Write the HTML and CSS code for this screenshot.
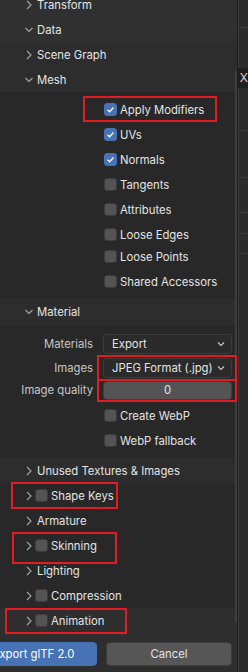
FILE: index.html
```html
<!DOCTYPE html>
<html lang="en">
<head>
    <meta charset="UTF-8">
    <title>Export glTF 2.0</title>
    <link rel="stylesheet" href="styles.css">
</head>
<body>

    <div class="app">
        <div class="panel">
            <div class="scrollbar"></div>

            <div class="sec top">
                <div class="row head">
                    <svg class="chev" viewBox="0 0 8 10"><polyline points="2,1 6,5 2,9"/></svg>
                    <span>Transform</span>
                </div>
                <div class="row head">
                    <svg class="chev" viewBox="0 0 8 10"><polyline points="0.5,3 4,6.5 7.5,3"/></svg>
                    <span>Data</span>
                </div>
            </div>

            <div class="sec data">
                <div class="row head">
                    <svg class="chev" viewBox="0 0 8 10"><polyline points="2,1 6,5 2,9"/></svg>
                    <span>Scene Graph</span>
                </div>
                <div class="row head">
                    <svg class="chev" viewBox="0 0 8 10"><polyline points="0.5,3 4,6.5 7.5,3"/></svg>
                    <span>Mesh</span>
                </div>
            </div>

            <div class="sec body mesh">
                <div class="row opt">
                    <span class="box on"><svg viewBox="0 0 13 13"><polyline points="3,6.8 5.4,9.2 10,4.2"/></svg></span>
                    <span>Apply Modifiers</span>
                    <div class="mark mark-apply"></div>
                </div>
                <div class="row opt">
                    <span class="box on"><svg viewBox="0 0 13 13"><polyline points="3,6.8 5.4,9.2 10,4.2"/></svg></span>
                    <span>UVs</span>
                </div>
                <div class="row opt">
                    <span class="box on"><svg viewBox="0 0 13 13"><polyline points="3,6.8 5.4,9.2 10,4.2"/></svg></span>
                    <span>Normals</span>
                </div>
                <div class="row opt"><span class="box"></span><span>Tangents</span></div>
                <div class="row opt"><span class="box"></span><span>Attributes</span></div>
                <div class="row opt"><span class="box"></span><span>Loose Edges</span></div>
                <div class="row opt tight"><span class="box"></span><span>Loose Points</span></div>
                <div class="row opt"><span class="box"></span><span>Shared Accessors</span></div>
            </div>

            <div class="sec sub material-head">
                <div class="row head">
                    <svg class="chev" viewBox="0 0 8 10"><polyline points="0.5,3 4,6.5 7.5,3"/></svg>
                    <span>Material</span>
                </div>
            </div>

            <div class="sec body material">
                <div class="row prop">
                    <span class="label">Materials</span>
                    <div class="field menu">
                        <span>Export</span>
                        <svg class="drop" viewBox="0 0 8 6"><polyline points="1,1.5 4,4.5 7,1.5"/></svg>
                    </div>
                </div>
                <div class="row prop images">
                    <span class="label">Images</span>
                    <div class="field menu">
                        <span>JPEG Format (.jpg)</span>
                        <svg class="drop" viewBox="0 0 8 6"><polyline points="1,1.5 4,4.5 7,1.5"/></svg>
                    </div>
                    <div class="mark mark-images"></div>
                </div>
                <div class="row prop quality">
                    <span class="label">Image quality</span>
                    <div class="field num">0</div>
                    <div class="mark mark-quality"></div>
                </div>
                <div class="row opt webp"><span class="box"></span><span>Create WebP</span></div>
                <div class="row opt"><span class="box"></span><span>WebP fallback</span></div>
            </div>

            <div class="sec sub">
                <div class="row head">
                    <svg class="chev" viewBox="0 0 8 10"><polyline points="2,1 6,5 2,9"/></svg>
                    <span>Unused Textures &amp; Images</span>
                </div>
            </div>

            <div class="sec list">
                <div class="row head">
                    <svg class="chev" viewBox="0 0 8 10"><polyline points="2,1 6,5 2,9"/></svg>
                    <span class="box"></span>
                    <span>Shape Keys</span>
                    <div class="mark mark-shape"></div>
                </div>
                <div class="row head">
                    <svg class="chev" viewBox="0 0 8 10"><polyline points="2,1 6,5 2,9"/></svg>
                    <span>Armature</span>
                </div>
                <div class="row head">
                    <svg class="chev" viewBox="0 0 8 10"><polyline points="2,1 6,5 2,9"/></svg>
                    <span class="box"></span>
                    <span>Skinning</span>
                    <div class="mark mark-skin"></div>
                </div>
                <div class="row head">
                    <svg class="chev" viewBox="0 0 8 10"><polyline points="2,1 6,5 2,9"/></svg>
                    <span>Lighting</span>
                </div>
                <div class="row head">
                    <svg class="chev" viewBox="0 0 8 10"><polyline points="2,1 6,5 2,9"/></svg>
                    <span class="box"></span>
                    <span>Compression</span>
                </div>
            </div>

            <div class="sec foot">
                <div class="row head">
                    <svg class="chev" viewBox="0 0 8 10"><polyline points="2,1 6,5 2,9"/></svg>
                    <span class="box"></span>
                    <span>Animation</span>
                    <div class="mark mark-anim"></div>
                </div>
                <div class="buttons">
                    <button class="btn primary">Export glTF 2.0</button>
                    <button class="btn">Cancel</button>
                </div>
            </div>
        </div>

        <div class="side">
            <div class="side-line l1"></div>
            <div class="side-x">X</div>
            <div class="side-line l2"></div>
            <div class="side-line l3"></div>
            <div class="side-line l4"></div>
            <div class="side-line l5"></div>
            <div class="side-line l6"></div>
        </div>
    </div>

</body>
</html>
```

FILE: styles.css
```css
body {
    margin: 0;
    height: 672px;
    overflow: hidden;
    background-color: #2e2e2e;
    font-family: Inter, "DejaVu Sans", sans-serif;
    font-size: 11.3px;
    color: #e4e4e4;
}

.app {
    display: flex;
    height: 672px;
}

.panel {
    position: relative;
    width: 240px;
    display: flex;
    flex-direction: column;
    background-color: #282828;
    white-space: nowrap;
}

.scrollbar {
    position: absolute;
    left: 235px;
    top: 71px;
    width: 2px;
    height: 552px;
    border-radius: 1px;
    background-color: #3e3e3e;
}

/* sections */

.top {
    margin-top: -8px;
    background-color: #303030;
}

.data {
    background-color: #2d2d2d;
}

.sub {
    background-color: #2d2d2d;
}

.mesh {
    padding: 5px 0 5px;
}

.material-head .row {
    height: 26px;
}

.material {
    padding: 6px 0 5px;
}

.foot {
    flex: 1;
    background-color: #2e2e2e;
}

/* rows */

.row {
    position: relative;
    height: 25px;
    display: flex;
    align-items: center;
    flex-shrink: 0;
}

.head {
    padding-left: 25px;
}

.chev {
    width: 8px;
    height: 10px;
    margin-right: 4px;
    flex-shrink: 0;
}

.chev polyline {
    fill: none;
    stroke: #a6a6a6;
    stroke-width: 1.1;
}

.head .box {
    margin-left: -2px;
    margin-right: 3px;
}

.opt {
    padding-left: 104px;
}

.opt .box {
    margin-right: 3px;
}

.tight {
    margin-top: -3px;
}

.webp {
    margin-top: 2px;
}

.box {
    width: 13px;
    height: 13px;
    box-sizing: border-box;
    border-radius: 3px;
    background-color: #545454;
    border: 1px solid #3c3c3c;
    flex-shrink: 0;
    display: flex;
}

.box.on {
    background-color: #4772b3;
    border-color: #4772b3;
}

.box svg {
    width: 11px;
    height: 11px;
}

.box polyline {
    fill: none;
    stroke: #ffffff;
    stroke-width: 1.5;
}

/* property rows */

.prop {
    gap: 10px;
}

.prop .label {
    width: 93px;
    text-align: right;
    color: #c6c6c6;
}

.images {
    height: 23px;
}

.quality {
    height: 22px;
}

.field {
    width: 129px;
    height: 20px;
    box-sizing: border-box;
    border-radius: 4px;
    border: 1px solid #3d3d3d;
    display: flex;
    align-items: center;
}

.menu {
    background-color: #2b2b2b;
    padding: 0 6px 0 8px;
    justify-content: space-between;
}

.drop {
    width: 8px;
    height: 6px;
}

.drop polyline {
    fill: none;
    stroke: #cfcfcf;
    stroke-width: 1.1;
}

.num {
    height: 19px;
    background-color: #545454;
    justify-content: center;
}

/* lower list */

.list {
    background-color: #282828;
}

/* buttons */

.buttons {
    display: flex;
    gap: 9px;
    margin-top: 9px;
    margin-left: -30px;
}

.btn {
    height: 24px;
    border: 1px solid #3d3d3d;
    border-radius: 4px;
    background-color: #565656;
    color: #e4e4e4;
    font-family: Inter, "DejaVu Sans", sans-serif;
    font-size: 11.3px;
    padding: 0;
    width: 126px;
    white-space: nowrap;
}

.btn.primary {
    width: 127px;
    background-color: #4772b3;
    border-color: #4772b3;
    color: #ffffff;
}

/* red annotation boxes */

.mark {
    position: absolute;
    box-sizing: border-box;
    border: 2px solid #e31b23;
}

.mark-apply {
    left: 83px;
    top: -1px;
    width: 134px;
    height: 26px;
}

.mark-images {
    left: 97px;
    top: -1px;
    width: 140px;
    height: 26px;
}

.mark-quality {
    left: 97px;
    top: 0;
    width: 140px;
    height: 23px;
}

.mark-shape {
    left: 11px;
    top: -1px;
    width: 107px;
    height: 27px;
}

.mark-skin {
    left: 12px;
    top: -1px;
    width: 105px;
    height: 32px;
}

.mark-anim {
    left: 5px;
    top: 0;
    width: 122px;
    height: 26px;
}

/* window behind the dialog */

.side {
    flex: 1;
    display: flex;
    flex-direction: column;
    border-left: 1px solid #1d1d1d;
    box-shadow: inset 1px 0 #3b3b3b;
    background-color: #2b2b2b;
}

.side-line {
    height: 1px;
    background-color: #3a3a3a;
}

.l1 { margin-top: 27px; }
.l2 { margin-top: 42px; }
.l3 { margin-top: 46px; }
.l4 { margin-top: 34px; }
.l5 { margin-top: 20px; }
.l6 { margin-top: 19px; }

.side-x {
    margin-top: 40px;
    height: 20px;
    line-height: 20px;
    padding-left: 2px;
    background-color: #1f1f1f;
    color: #d0d0d0;
    font-size: 12px;
}
```
